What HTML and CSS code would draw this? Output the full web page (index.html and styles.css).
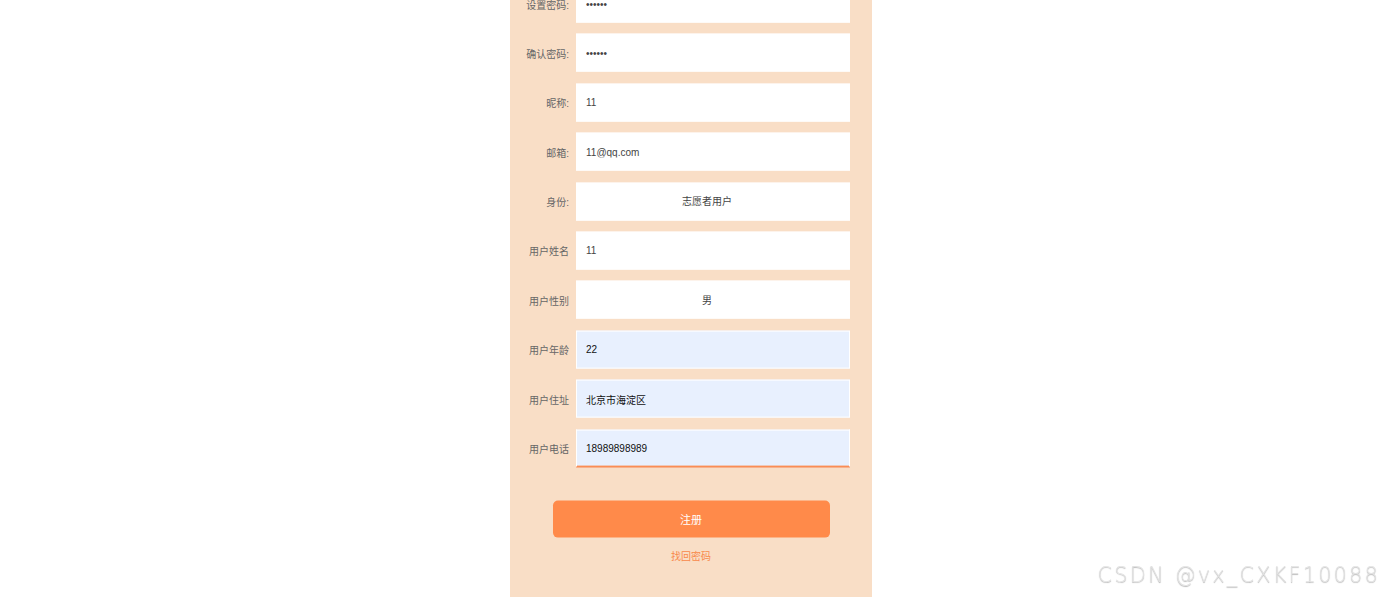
FILE: index.html
```html
<!DOCTYPE html>
<html lang="zh-CN">
<head>
<meta charset="utf-8">
<title>注册</title>
<link rel="stylesheet" href="styles.css">
</head>
<body>
<div class="panel">
  <form class="form">
    <div class="row"><label class="label">设置密码:</label><input class="field" type="password" value="123456"></div>
    <div class="row"><label class="label">确认密码:</label><input class="field" type="password" value="123456"></div>
    <div class="row"><label class="label">昵称:</label><input class="field" type="text" value="11"></div>
    <div class="row"><label class="label">邮箱:</label><input class="field" type="text" value="11@qq.com"></div>
    <div class="row"><label class="label">身份:</label><select class="field select"><option>志愿者用户</option></select></div>
    <div class="row"><label class="label">用户姓名</label><input class="field" type="text" value="11"></div>
    <div class="row"><label class="label">用户性别</label><select class="field select"><option>男</option></select></div>
    <div class="row"><label class="label">用户年龄</label><input class="field filled" type="text" value="22"></div>
    <div class="row"><label class="label">用户住址</label><input class="field filled" type="text" value="北京市海淀区"></div>
    <div class="row"><label class="label">用户电话</label><input class="field filled focused" type="text" value="18989898989"></div>
    <div class="actions">
      <button class="submit" type="button">注册</button>
      <a class="link" href="#">找回密码</a>
    </div>
  </form>
</div>
<div class="watermark">CSDN @vx_CXKF10088</div>
</body>
</html>
```

FILE: styles.css
```css
html, body {
  margin: 0;
  padding: 0;
  background: #ffffff;
  height: 100%;
  overflow: hidden;
  font-family: "Liberation Sans", "Noto Sans CJK SC", sans-serif;
}

.panel {
  width: 362px;
  min-height: 100vh;
  margin: 0 auto;
  background: #f9dec6;
}

.form {
  display: flex;
  flex-direction: column;
  gap: 11.4px;
  margin: 0;
  padding-top: 0;
  transform: translateY(-15.4px);
}

.row {
  display: flex;
  align-items: center;
  gap: 6px;
}

.label {
  width: 60px;
  text-align: right;
  font-size: 10px;
  color: #666666;
  padding-right: 1px;
  box-sizing: border-box;
}

.field {
  box-sizing: border-box;
  width: 274px;
  height: 38px;
  border: 1px solid #ffffff;
  background: #ffffff;
  padding: 0 0 0 9px;
  font-family: "Liberation Sans", "Noto Sans CJK SC", sans-serif;
  font-size: 10px;
  color: #444444;
  outline: none;
  margin: 0;
  border-radius: 0;
}

.select {
  appearance: none;
  -webkit-appearance: none;
  text-align: center;
  text-align-last: center;
  padding: 0 12px 0 0;
}

.filled {
  background: #e8f0fe;
  color: #111111;
}

.focused {
  border-bottom: 2px solid #fb8d54;
}

.actions {
  display: flex;
  flex-direction: column;
  align-items: center;
  padding-top: 22.4px;
}

.submit {
  width: 277px;
  height: 37px;
  border: none;
  border-radius: 5px;
  background: #ff8a4a;
  color: #ffffff;
  font-family: "Liberation Sans", "Noto Sans CJK SC", sans-serif;
  font-size: 11px;
  padding: 0 0 2px 0;
}

.link {
  margin-top: 12px;
  font-size: 10px;
  color: #f8894a;
  text-decoration: none;
  line-height: 14px;
}

.watermark {
  position: fixed;
  right: 2px;
  bottom: 9px;
  font-family: "DejaVu Sans", sans-serif;
  font-weight: 200;
  font-size: 21px;
  letter-spacing: 2.1px;
  color: #e2e2e2;
  text-shadow: 0 1px 1px rgba(0, 0, 0, 0.28);
  line-height: 26px;
}
```
